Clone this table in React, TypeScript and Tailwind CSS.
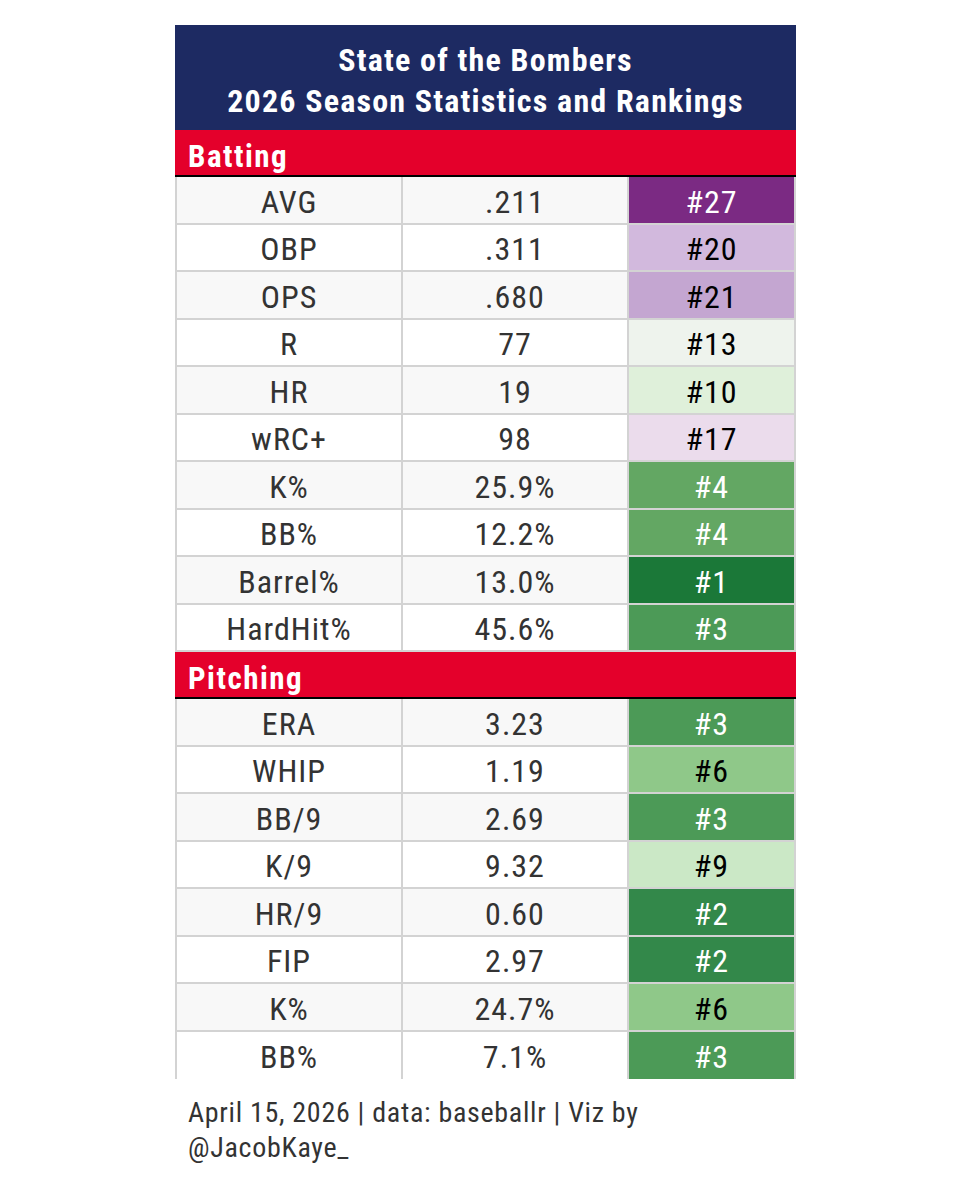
import React from "react";

type Row = { stat: string; value: string; rank: string; bg: string; light: boolean };

const batting: Row[] = [
  { stat: "AVG", value: ".211", rank: "#27", bg: "bg-[#7b2a83]", light: true },
  { stat: "OBP", value: ".311", rank: "#20", bg: "bg-[#d2b9dd]", light: false },
  { stat: "OPS", value: ".680", rank: "#21", bg: "bg-[#c4a6d1]", light: false },
  { stat: "R", value: "77", rank: "#13", bg: "bg-[#eef3ed]", light: false },
  { stat: "HR", value: "19", rank: "#10", bg: "bg-[#dff0da]", light: false },
  { stat: "wRC+", value: "98", rank: "#17", bg: "bg-[#ebdcec]", light: false },
  { stat: "K%", value: "25.9%", rank: "#4", bg: "bg-[#63a763]", light: true },
  { stat: "BB%", value: "12.2%", rank: "#4", bg: "bg-[#63a763]", light: true },
  { stat: "Barrel%", value: "13.0%", rank: "#1", bg: "bg-[#1b7838]", light: true },
  { stat: "HardHit%", value: "45.6%", rank: "#3", bg: "bg-[#4c9a57]", light: true },
];

const pitching: Row[] = [
  { stat: "ERA", value: "3.23", rank: "#3", bg: "bg-[#4c9a57]", light: true },
  { stat: "WHIP", value: "1.19", rank: "#6", bg: "bg-[#8fc889]", light: false },
  { stat: "BB/9", value: "2.69", rank: "#3", bg: "bg-[#4c9a57]", light: true },
  { stat: "K/9", value: "9.32", rank: "#9", bg: "bg-[#cbe8c6]", light: false },
  { stat: "HR/9", value: "0.60", rank: "#2", bg: "bg-[#33884a]", light: true },
  { stat: "FIP", value: "2.97", rank: "#2", bg: "bg-[#33884a]", light: true },
  { stat: "K%", value: "24.7%", rank: "#6", bg: "bg-[#8fc889]", light: false },
  { stat: "BB%", value: "7.1%", rank: "#3", bg: "bg-[#4c9a57]", light: true },
];

const FONT = "font-['Roboto_Condensed','Liberation_Sans_Narrow','DejaVu_Sans_Condensed',Roboto,sans-serif]";

function Section({ title, rows, last }: { title: string; rows: Row[]; last?: boolean }) {
  return (
    <div>
      <div className="h-[47px] bg-[#e4002b] border-b-2 border-black flex items-center pl-[13px] pt-[7px]">
        <span className="text-white font-bold text-[31px] tracking-[1.5px] leading-none">{title}</span>
      </div>
      {rows.map((r, i) => {
        const isLast = last && i === rows.length - 1;
        const rowBg = i % 2 === 0 ? "bg-[#f8f8f8]" : "bg-white";
        return (
          <div
            key={r.stat + i}
            className={`flex h-[47.5px] ${isLast ? "" : "border-b-2"} border-[#d3d3d3] text-[32px] tracking-[1px] leading-none`}
          >
            <div className={`w-[226px] border-l-2 border-[#d3d3d3] ${rowBg} flex items-center justify-center pt-[4px] text-[#333333]`}>
              {r.stat}
            </div>
            <div className={`w-[226px] border-l-2 border-[#d3d3d3] ${rowBg} flex items-center justify-center pt-[4px] text-[#333333]`}>
              {r.value}
            </div>
            <div
              className={`w-[169px] border-l-2 border-r-2 border-[#d3d3d3] ${r.bg} flex items-center justify-center pt-[4px] ${
                r.light ? "text-white" : "text-black"
              }`}
            >
              {r.rank}
            </div>
          </div>
        );
      })}
    </div>
  );
}

export default function App() {
  return (
    <div className={`w-[971px] h-[1200px] bg-white ${FONT}`}>
      <div className="pt-[25px] pl-[175px]">
        <div className="w-[621px]">
          <div className="h-[105px] bg-[#1d2a62] flex flex-col items-center justify-center pt-[6px] text-white font-bold text-[32px] tracking-[1.2px] leading-[41px]">
            <div>State of the Bombers</div>
            <div>2026 Season Statistics and Rankings</div>
          </div>
          <Section title="Batting" rows={batting} />
          <Section title="Pitching" rows={pitching} last />
        </div>
        <div className="pt-[16px] pl-[13px] w-[560px] text-[28px] tracking-[0.7px] leading-[35px] text-[#333333]">
          April 15, 2026 | data: baseballr | Viz by
          <br />
          @JacobKaye_
        </div>
      </div>
    </div>
  );
}
